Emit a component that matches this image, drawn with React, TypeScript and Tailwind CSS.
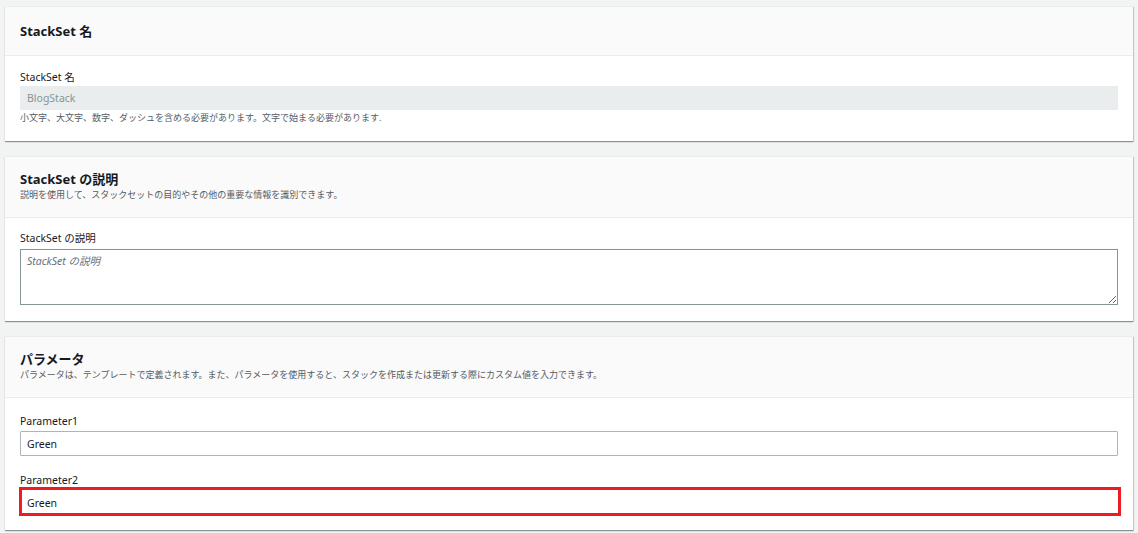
const font = "font-['Noto_Sans','Noto_Sans_CJK_JP',sans-serif]";

function Card({ title, desc, children }: { title: string; desc?: string; children: React.ReactNode }) {
  return (
    <section className="bg-white border-t border-[#eaeded] shadow-[0_1px_1px_0_rgba(0,28,36,0.35),1px_1px_1px_0_rgba(0,28,36,0.15)]">
      <div className={`bg-[#fafafa] border-b border-[#eaeded] px-[15px] ${desc ? "pt-[13px] pb-[15px]" : "py-[15px]"}`}>
        <h2 className="text-[13px] leading-[18px] font-bold text-[#16191f]">{title}</h2>
        {desc && <p className="text-[9px] leading-[14px] text-[#545b64]">{desc}</p>}
      </div>
      <div className="px-[15px] pt-[14px] pb-[16px]">{children}</div>
    </section>
  );
}

export default function App() {
  return (
    <div className={`min-h-screen bg-[#f2f3f3] px-[5px] pt-[6px] pb-[3px] flex flex-col gap-[15px] ${font}`}>
      <Card title="StackSet 名">
        <label className="block text-[10.5px] leading-[14px] text-[#16191f] mb-[2px]">StackSet 名</label>
        <input
          disabled
          value="BlogStack"
          readOnly
          className="block w-full h-[24px] bg-[#eaeded] border border-[#eaeded] px-[6px] text-[10.5px] text-[#879596]"
        />
        <p className="text-[9px] leading-[14px] text-[#545b64] mt-[1px]">
          小文字、大文字、数字、ダッシュを含める必要があります。文字で始まる必要があります.
        </p>
      </Card>

      <Card title="StackSet の説明" desc="説明を使用して、スタックセットの目的やその他の重要な情報を識別できます。">
        <label className="block text-[10.5px] leading-[14px] text-[#16191f] mb-[4px] -mt-[1px]">StackSet の説明</label>
        <textarea
          placeholder="StackSet の説明"
          className="block w-full h-[56px] border border-[#879596] px-[6px] py-[3px] text-[10.5px] leading-[16px] placeholder:italic placeholder:text-[#687078] outline-none"
        />
      </Card>

      <Card
        title="パラメータ"
        desc="パラメータは、テンプレートで定義されます。また、パラメータを使用すると、スタックを作成または更新する際にカスタム値を入力できます。"
      >
        <div className="pt-[2px] -mb-[2px]">
          <label className="block text-[10.5px] leading-[14px] text-[#16191f] mb-[3px]">Parameter1</label>
          <input
            value="Green"
            readOnly
            className="block w-full h-[25px] border border-[#aab7b8] rounded-[1px] px-[6px] text-[10.5px] text-[#16191f] outline-none"
          />
          <label className="block text-[10.5px] leading-[14px] text-[#16191f] mt-[17px]">Parameter2</label>
          <div className="-ml-[1px] -mr-[3px] h-[29px] border-[3px] border-[#ec1c24] bg-white flex items-center">
            <input
              value="Green"
              readOnly
              className="w-full h-full bg-white px-[5px] pt-[2px] text-[10.5px] text-[#16191f] outline-none"
            />
          </div>
        </div>
      </Card>
    </div>
  );
}
